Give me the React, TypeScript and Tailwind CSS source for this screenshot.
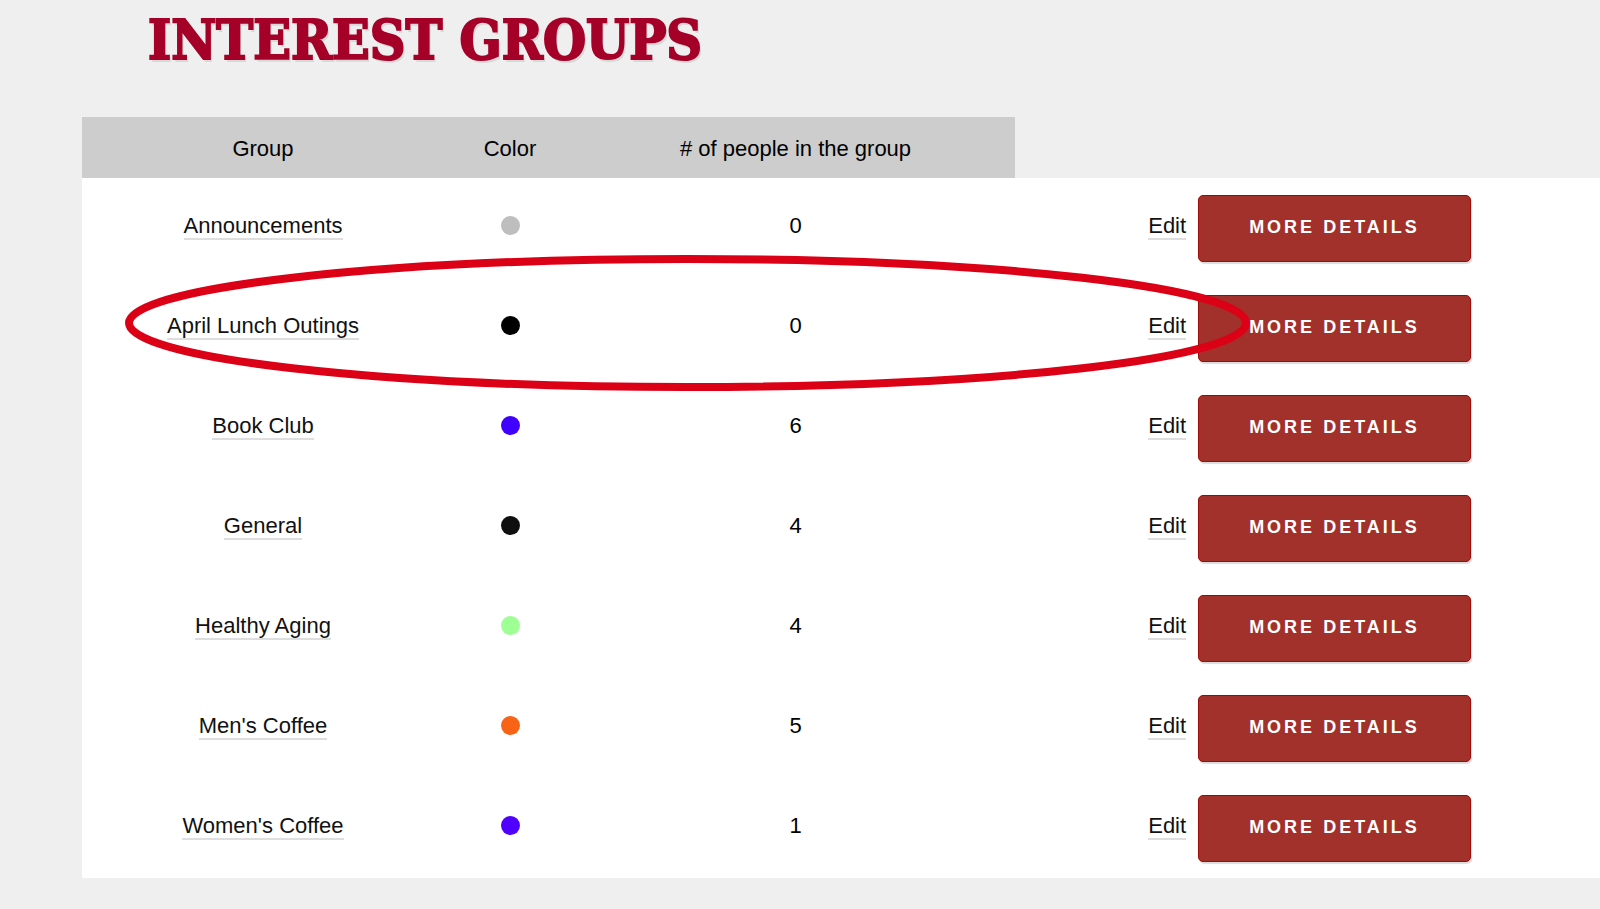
const groups = [
  { name: "Announcements", dot: "bg-[#bebebe]", people: 0 },
  { name: "April Lunch Outings", dot: "bg-black", people: 0 },
  { name: "Book Club", dot: "bg-[#4000ff]", people: 6 },
  { name: "General", dot: "bg-[#0f0f0f]", people: 4 },
  { name: "Healthy Aging", dot: "bg-[#9eff94]", people: 4 },
  { name: "Men's Coffee", dot: "bg-[#f96316]", people: 5 },
  { name: "Women's Coffee", dot: "bg-[#5000ff]", people: 1 },
];

const headClass = "bg-[#cdcdcd] pt-0.5 font-normal";
const linkClass = "border-b-2 border-[#dedede] text-[#111]";

export default function App() {
  return (
    <main className="min-h-screen bg-[#efefef] font-['Liberation_Sans',Arial,sans-serif] text-[22px] leading-7 text-black">
      <h1 className="pl-[148px] pt-2 pb-[45px] font-['DejaVu_Serif_Condensed','DejaVu_Serif',serif] text-[55px] leading-[64px] font-bold text-[#a50028] [-webkit-text-stroke:2px_#a50028] [text-shadow:2px_3px_0_#d8d8d8]">
        INTEREST GROUPS
      </h1>

      <div className="relative ml-[82px]">
        <table className="w-full table-fixed border-collapse text-center">
          <colgroup>
            <col className="w-[362px]" />
            <col className="w-[132px]" />
            <col className="w-[439px]" />
            <col />
          </colgroup>
          <thead>
            <tr className="h-[61px]">
              <th scope="col" className={headClass}>Group</th>
              <th scope="col" className={headClass}>Color</th>
              <th scope="col" className={headClass}># of people in the group</th>
              <td />
            </tr>
          </thead>
          <tbody className="bg-white">
            {groups.map((group) => (
              <tr key={group.name} className="h-[100px] align-baseline">
                <td>
                  <a href="#" className={linkClass}>{group.name}</a>
                </td>
                <td>
                  <span className={`-mb-0.5 inline-block size-[19px] rounded-full ${group.dot}`} />
                </td>
                <td>{group.people}</td>
                <td className="pt-[17px] pb-4 pl-1">
                  <div className="flex items-baseline justify-center gap-3">
                    <span>
                      <a href="#" className={linkClass}>Edit</a>
                    </span>
                    <button
                      type="button"
                      className="rounded-[5px] border border-[#9c0b08] bg-[#a3312b] px-[50px] pt-[17px] pb-5 text-[18px] leading-7 font-bold tracking-[3px] text-white shadow-[1px_2px_1px_#dcdcdc]"
                    >
                      MORE DETAILS
                    </button>
                  </div>
                </td>
              </tr>
            ))}
          </tbody>
        </table>

        {/* Hand-drawn style ring around the second row */}
        <svg
          className="pointer-events-none absolute top-[138px] left-[43px] h-[136px] w-[1125px]"
          viewBox="0 0 1125 136"
          fill="none"
          aria-hidden="true"
        >
          <ellipse cx="562.5" cy="68" rx="558.5" ry="64" stroke="#db0016" strokeWidth="8" />
        </svg>
      </div>
    </main>
  );
}
